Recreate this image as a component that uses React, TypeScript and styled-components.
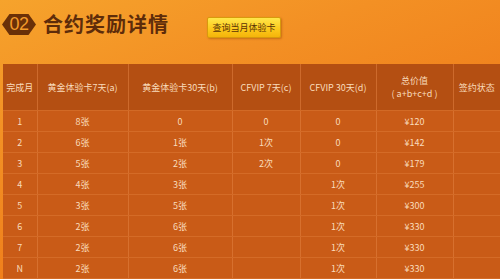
import React from 'react'
import styled, { createGlobalStyle } from 'styled-components'

const GlobalStyle = createGlobalStyle`
  html, body {
    margin: 0;
    padding: 0;
  }
  body {
    width: 500px;
    height: 279px;
    overflow: hidden;
    font-family: "Noto Sans CJK SC", "Noto Sans", sans-serif;
  }
`

const rows = [
  ['1', '8张', '0', '0', '0', '¥120'],
  ['2', '6张', '1张', '1次', '0', '¥142'],
  ['3', '5张', '2张', '2次', '0', '¥179'],
  ['4', '4张', '3张', '', '1次', '¥255'],
  ['5', '3张', '5张', '', '1次', '¥300'],
  ['6', '2张', '6张', '', '1次', '¥330'],
  ['7', '2张', '6张', '', '1次', '¥330'],
  ['N', '2张', '6张', '', '1次', '¥330'],
]

const colWidths = [34, 91, 104, 68, 76, 77, 47]

const App = () => {
  return (
    <Page>
      <GlobalStyle />
      <Header>
        <Badge>02</Badge>
        <Title>合约奖励详情</Title>
        <QueryButton>查询当月体验卡</QueryButton>
      </Header>
      <Table>
        <colgroup>
          {colWidths.map((w, i) => (
            <col key={i} style={{ width: w }} />
          ))}
        </colgroup>
        <thead>
          <tr>
            <Th>完成月</Th>
            <Th>黄金体验卡7天(a)</Th>
            <Th>黄金体验卡30天(b)</Th>
            <Th>CFVIP 7天(c)</Th>
            <Th>CFVIP 30天(d)</Th>
            <Th>
              总价值
              <br />( a+b+c+d )
            </Th>
            <Th>签约状态</Th>
          </tr>
        </thead>
        <tbody>
          {rows.map((r) => (
            <tr key={r[0]}>
              {r.map((c, i) => (
                <Td key={i}>{c}</Td>
              ))}
              <Td />
            </tr>
          ))}
        </tbody>
      </Table>
    </Page>
  )
}

export default App

const Page = styled.div`
  width: 500px;
  height: 279px;
  overflow: hidden;
  background: linear-gradient(160deg, #f6a32c 0%, #f39024 30%, #f0801c 60%, #ee7a1a 100%);
`

const Header = styled.div`
  height: 64px;
  display: flex;
  align-items: flex-start;
  padding-left: 2px;
  box-sizing: border-box;
`

const Badge = styled.div`
  margin-top: 14px;
  width: 34px;
  height: 21px;
  background: #6a3008;
  clip-path: polygon(22% 0, 78% 0, 100% 50%, 78% 100%, 22% 100%, 0 50%);
  color: #f39a2a;
  font-family: "Liberation Sans", sans-serif;
  font-size: 18px;
  line-height: 21px;
  text-align: center;
  letter-spacing: -0.5px;
`

const Title = styled.h1`
  margin: 11px 0 0 7px;
  font-size: 20px;
  line-height: 26px;
  font-weight: 700;
  color: #5e2c0a;
  letter-spacing: 1px;
`

const QueryButton = styled.div`
  margin: 17px 0 0 38px;
  width: 74px;
  height: 21px;
  box-sizing: border-box;
  border: 1px solid #d89a0c;
  border-radius: 2px;
  background: linear-gradient(#ffe64a, #fcc81a 60%, #f5b40a);
  box-shadow: 1px 1px 2px rgba(150, 70, 0, 0.45);
  color: #5a3206;
  font-size: 9px;
  line-height: 19px;
  text-align: center;
  white-space: nowrap;
`

const Table = styled.table`
  margin-left: 3px;
  width: 497px;
  table-layout: fixed;
  border-collapse: collapse;
  color: #f9dcbc;
  font-size: 9px;
  text-align: center;
`

const Th = styled.th`
  height: 46px;
  padding: 0;
  font-weight: 400;
  line-height: 13px;
  background: #b44f12;
  border-left: 1px solid #cd6a2c;
  border-bottom: 1px solid #d26a26;
  &:first-child {
    border-left: none;
  }
`

const Td = styled.td`
  height: 20px;
  padding: 0;
  background: #c95b17;
  border-left: 1px solid #d7702e;
  border-bottom: 1px solid #d46b27;
  &:first-child {
    border-left: none;
  }
`
